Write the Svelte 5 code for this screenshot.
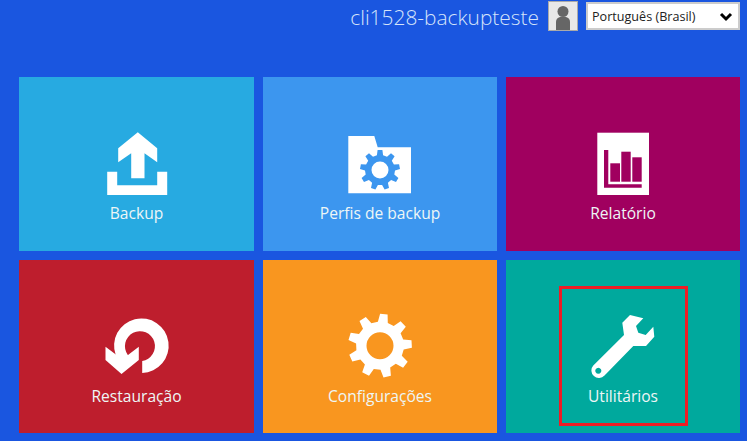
<script>
    // builds a cog outline around cx,cy, the hole is added as a second subpath
    function gear(cx, cy, rOut, rBody, rHole, teeth, rot) {
        let d = "";
        const step = (Math.PI * 2) / teeth;
        for (let i = 0; i < teeth; i++) {
            const a = rot + i * step;
            const pts = [
                [rBody, a - step * 0.3],
                [rOut, a - step * 0.17],
                [rOut, a + step * 0.17],
                [rBody, a + step * 0.3]
            ];
            for (const [r, t] of pts) {
                d += (d ? "L" : "M") + (cx + r * Math.cos(t)).toFixed(1) + " " + (cy + r * Math.sin(t)).toFixed(1);
            }
        }
        d += "Z";
        d += `M${cx - rHole} ${cy}a${rHole} ${rHole} 0 1 0 ${rHole * 2} 0a${rHole} ${rHole} 0 1 0 ${-rHole * 2} 0Z`;
        return d;
    }

    const folderGear = gear(380, 170, 20, 15, 8.5, 9, -Math.PI / 2);
    const bigGear = gear(380, 345.7, 32, 24, 13.5, 9, -1.45);
</script>

<div class="page">
    <header>
        <span class="user">cli1528-backupteste</span>
        <div class="avatar">
            <svg width="28" height="28" viewBox="0 0 28 28">
                <circle cx="14" cy="9.5" r="5.5" fill="#666" />
                <path d="M7 28V20q0-4 4-5h6q4 1 4 5v8Z" fill="#666" />
            </svg>
        </div>
        <div class="lang">
            <select>
                <option>Português (Brasil)</option>
            </select>
            <svg class="chev" width="14" height="10" viewBox="0 0 14 10">
                <path d="M2 2l5 5 5-5" fill="none" stroke="#000" stroke-width="3" />
            </svg>
        </div>
    </header>

    <div class="tiles">
        <div class="tile backup">
            <svg viewBox="91.5 127 90 70">
                <path d="M137.3 132.3L156.7 148.3V162.3L144 153.3V178.3H130.7V153.3L117.7 162.3V148.3Z" fill="#fff" />
                <path d="M106.7 171.7H116.7V185.3H156.7V171.7H166.7V195H106.7Z" fill="#fff" />
            </svg>
            <span>Backup</span>
        </div>
        <div class="tile perfis">
            <svg viewBox="335 127 90 70">
                <path d="M348.3 136H374.3L377.7 147.3H411V193.3H348.3Z" fill="#fff" />
                <path d={folderGear} fill="#3c96ef" fill-rule="evenodd" />
            </svg>
            <span>Perfis de backup</span>
        </div>
        <div class="tile relatorio">
            <svg viewBox="578 127 90 70">
                <rect x="597.3" y="132.7" width="51.7" height="62.3" fill="#fff" />
                <path d="M604 150H608.3V184.3H641.7V187.7H604Z" fill="#a0005f" />
                <rect x="610.3" y="163.3" width="9.7" height="18.4" fill="#a0005f" />
                <rect x="621.3" y="151.7" width="9.4" height="30" fill="#a0005f" />
                <rect x="632.3" y="157.3" width="9.4" height="24.4" fill="#a0005f" />
            </svg>
            <span>Relatório</span>
        </div>
        <div class="tile restauracao">
            <svg viewBox="91.5 310 90 70">
                <path d="M141.7 373A27.3 27.3 0 1 0 115.2 355L127.3 355A15 15 0 1 1 141.7 361Z" fill="#fff" />
                <path d="M105 346.7L116 355L127.5 355L138.3 346.7V360L121 374L105 360Z" fill="#fff" />
            </svg>
            <span>Restauração</span>
        </div>
        <div class="tile config">
            <svg viewBox="335 310 90 70">
                <path d={bigGear} fill="#fff" fill-rule="evenodd" />
            </svg>
            <span>Configurações</span>
        </div>
        <div class="tile util">
            <svg viewBox="578 310 90 70">
                <path
                    fill="#fff"
                    fill-rule="evenodd"
                    d="M622.3 322.7L630 315L643.3 318.3L636 326L638.3 332.7L645.7 335L653.3 326.7L654.3 336.7L646 346H633.3L604.5 375.5A7.5 7.5 0 0 1 593.3 365.5L624 335ZM598.3 367.7a3 3 0 1 0 0.01 0Z"
                />
            </svg>
            <span>Utilitários</span>
            <div class="mark"></div>
        </div>
    </div>
</div>

<style>
    :global(body) {
        background-color: #1a56e0;
    }

    .page {
        width: 747px;
        height: 441px;
        overflow: hidden;
        font-family: "Open Sans", sans-serif;
    }

    header {
        height: 77px;
        display: flex;
        align-items: flex-start;
        justify-content: flex-end;
        padding-right: 7px;
        box-sizing: border-box;
    }

    .user {
        font-size: 20.9px;
        font-weight: 300;
        color: #d6e4fa;
        line-height: 30px;
        margin-top: 2px;
        margin-right: 9px;
    }

    .avatar {
        width: 30px;
        height: 30px;
        margin-top: 1px;
        margin-right: 8px;
        box-sizing: border-box;
        border: 1px solid #aaa;
        background-color: #e8e8e8;
    }

    .avatar svg {
        display: block;
    }

    .lang {
        position: relative;
        margin-top: 2px;
    }

    select {
        appearance: none;
        display: block;
        width: 154px;
        height: 28px;
        box-sizing: border-box;
        border: 2px solid #ccc;
        border-radius: 0;
        background-color: #fff;
        color: #222;
        font-family: "Open Sans", sans-serif;
        font-size: 12.6px;
        padding: 0 0 0 4px;
    }

    .chev {
        position: absolute;
        top: 10px;
        right: 7px;
    }

    .tiles {
        display: grid;
        grid-template-columns: 235px 234px 234px;
        grid-template-rows: 174px 173px;
        gap: 9px;
        padding-left: 19px;
    }

    .tile {
        position: relative;
        display: flex;
        flex-direction: column;
        align-items: center;
        padding-top: 50px;
        box-sizing: border-box;
        color: #eef6f6;
        font-size: 15.6px;
    }

    .tile svg {
        width: 90px;
        height: 70px;
        display: block;
    }

    .tile span {
        margin-top: 5px;
        line-height: 22px;
    }

    .backup { background-color: #27aae1; }
    .perfis { background-color: #3c96ef; }
    .relatorio { background-color: #a0005f; }
    .restauracao { background-color: #be1e2d; }
    .config { background-color: #f9961f; }
    .util { background-color: #00a99d; }

    .mark {
        position: absolute;
        left: 53px;
        top: 26px;
        width: 129px;
        height: 140px;
        box-sizing: border-box;
        border: 3px solid #ee1c25;
    }
</style>
